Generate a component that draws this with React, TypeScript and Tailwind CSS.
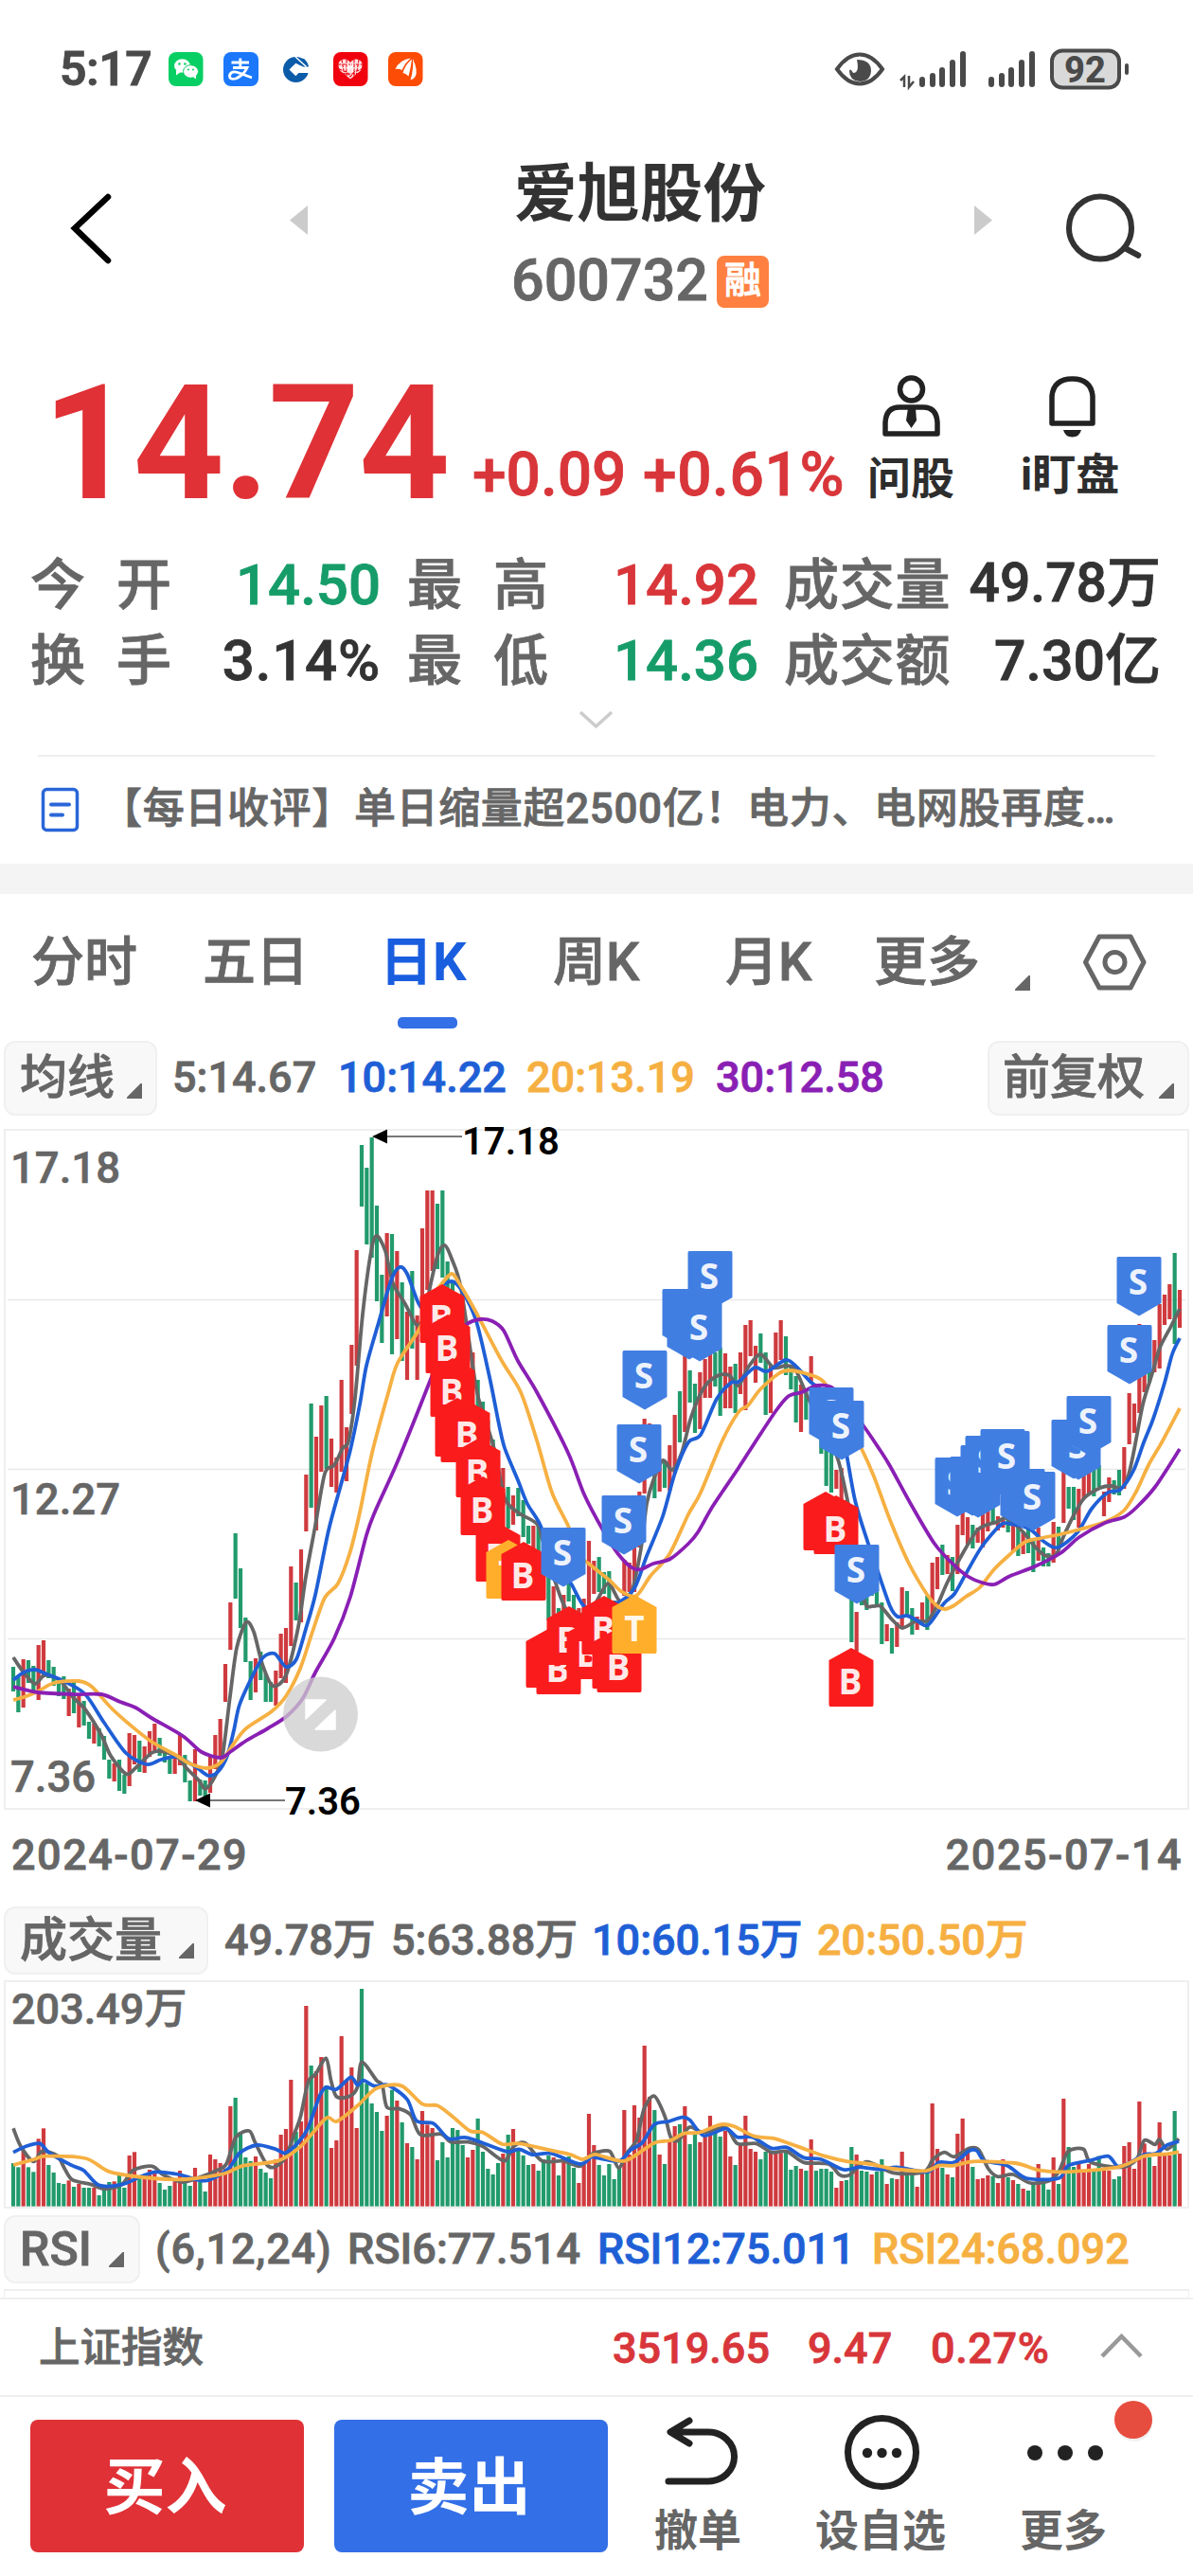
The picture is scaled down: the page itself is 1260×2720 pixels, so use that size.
import React from "react";

type Pt = [number, number];

const RED = "#cf3a3e";
const GREEN = "#229a6c";
const GRAY = "#666666";
const BLUE = "#1f5fd6";
const ORANGE = "#f6b042";
const PURPLE = "#8a1fb4";

const STEP = 16 / 3;
const barX = (i: number) => 14 + i * STEP;

/* Candle series: direction and high/low position for each trading day. */
const CANDLES = `G1760-1786 G1771-1808 R1752-1803 G1753-1777 G1759-1785 R1737-1795 R1732-1771 G1753-1772 G1760-1780 G1771-1791
G1770-1794 R1783-1812 G1776-1809 R1788-1824 G1796-1822 G1818-1836 R1820-1841 G1825-1844 G1833-1858 G1858-1878
R1862-1881 G1858-1891 G1874-1894 R1830-1886 R1832-1863 G1838-1871 R1844-1872 R1828-1855 R1820-1849 G1835-1854
G1849-1861 G1855-1873 R1856-1873 R1832-1864 G1853-1882 G1880-1902 R1847-1902 G1879-1896 G1880-1897 R1854-1893
R1832-1868 R1815-1855 R1757-1797 R1692-1742 G1619-1688 G1656-1719 G1708-1755 G1754-1795 R1751-1787 G1744-1774
G1767-1797 G1776-1797 R1764-1801 R1725-1772 R1719-1777 R1654-1738 G1671-1711 R1636-1713 R1557-1617 G1482-1592
R1517-1616 R1484-1554 G1474-1551 R1519-1570 R1539-1576 R1457-1554 R1507-1564 R1420-1493 R1320-1442 G1209-1274
G1233-1314 G1201-1328 G1273-1374 G1346-1418 R1302-1390 G1303-1430 R1321-1414 G1354-1437 R1385-1457 G1342-1424
R1389-1457 R1297-1374 R1257-1362 R1257-1342 G1271-1340 G1257-1349 G1332-1361 G1353-1378 G1370-1400 G1390-1420
R1410-1440 R1428-1454 G1457-1491 G1480-1510 G1500-1530 G1520-1550 G1540-1570 R1550-1590 G1570-1614 R1579-1610
G1571-1601 G1584-1623 G1611-1630 R1611-1637 G1609-1651 G1634-1676 G1664-1711 R1675-1706 G1698-1710 R1684-1702
G1672-1691 G1684-1702 R1698-1706 R1688-1706 R1627-1698 R1648-1683 G1644-1681 G1660-1683 G1659-1689 G1690-1700
R1690-1700 R1647-1685 R1650-1681 R1632-1681 R1575-1634 R1498-1577 R1503-1551 G1555-1582 R1544-1575 G1542-1571
R1526-1574 R1494-1556 G1469-1523 R1430-1512 G1447-1481 G1461-1513 R1449-1509 R1435-1476 R1430-1476 G1428-1464
G1423-1495 R1429-1487 R1443-1487 G1440-1492 R1428-1472 R1399-1489 R1394-1432 R1421-1460 G1408-1439 G1428-1494
R1441-1492 R1407-1444 R1394-1436 G1411-1452 G1441-1467 G1453-1502 R1462-1512 G1467-1499 R1432-1459 R1465-1490
G1501-1535 G1512-1569 G1526-1576 R1552-1572 R1550-1584 R1584-1600 G1673-1734 R1702-1744 G1673-1695 G1684-1700
G1670-1685 G1676-1694 G1692-1736 R1715-1733 G1719-1746 R1713-1739 R1676-1717 G1680-1705 G1698-1726 R1707-1721
R1692-1716 G1685-1721 R1650-1710 R1644-1678 G1631-1663 R1642-1662 G1644-1680 R1610-1662 R1593-1621 R1602-1631
G1610-1635 R1613-1629 R1597-1634 R1593-1617 G1592-1607 R1601-1616 R1603-1613 G1600-1618 R1608-1638 G1613-1643
R1618-1641 G1613-1640 G1625-1660 R1613-1648 G1634-1654 G1640-1654 R1607-1650 G1612-1635 R1553-1608 G1570-1593
G1570-1605 R1572-1613 R1557-1583 R1553-1577 G1552-1580 G1547-1570 R1575-1601 R1560-1586 G1563-1578 G1552-1579
R1528-1572 R1471-1525 R1482-1513 R1398-1492 R1440-1470 G1437-1460 R1415-1449 R1377-1445 R1367-1399 R1356-1393
G1323-1419 R1362-1402`
  .split(/\s+/)
  .map((s) => {
    const [t, b] = s.slice(1).split("-").map(Number);
    return { up: s[0] === "R", t, b };
  });

const VOLUMES = `G612 G625 R570 G625 G640 R535 R502 G618 G642 G675 G678 R667 G687 R678 G690 G690 R690 G714 G690 G672
R670 G650 G690 R588 R577 G660 R660 R633 R645 G675 G696 G684 R670 R636 G672 G684 R627 G672 G702 R585
R600 R612 R630 R432 G405 G513 G594 G606 R591 G630 G642 G660 R600 R522 R504 R348 G513 R480 R114 G303
R321 R276 G366 R564 R540 R210 R348 R309 R501 G60 G360 G423 G450 G510 R462 G380 R414 G483 R549 G561
R600 R447 R490 R501 G603 G546 G594 G501 G507 G555 R594 R570 G471 G576 G630 G648 G612 R582 G522 R504
G570 G588 G618 R615 G636 G600 G588 R594 G651 R600 G591 G627 R675 R615 R456 R555 G618 G651 G615 G663
G627 R444 R585 R429 R468 R240 R402 G444 R585 G615 R540 R495 G489 R432 G552 G520 R546 R525 R462 G515
G528 R510 R591 G618 R555 R462 R567 R576 G600 G576 R575 R575 R580 G575 G633 G621 R630 G636 R537 G636
G630 G630 G639 R690 R669 G666 G561 R585 G636 G639 R648 G639 G600 R678 G660 R663 R576 G651 G645 R687
R642 G640 R423 R567 G627 R648 G657 R519 R471 R570 G624 R663 R660 R651 G654 R675 R600 G657 R666 G678
R693 G699 G675 R615 G675 G696 R594 G678 R408 G561 G624 R610 R642 R615 G635 G590 R636 R636 G663 G654
R558 R546 R630 R417 R550 G594 R621 R483 R585 R588 G447 R582`
  .split(/\s+/)
  .map((s) => ({ up: s[0] === "R", v: Number(s.slice(1)) }));

const points = (s: string): Pt[] => s.trim().split(/\s+/).map((p) => p.split(",").map(Number) as Pt);

/* Catmull-Rom spline through the points. */
function smooth(p: Pt[]) {
  let d = `M${p[0][0]} ${p[0][1]}`;
  for (let i = 0; i < p.length - 1; i++) {
    const a = p[Math.max(i - 1, 0)];
    const b = p[i];
    const c = p[i + 1];
    const e = p[Math.min(i + 2, p.length - 1)];
    const f = 7;
    d += `C${b[0] + (c[0] - a[0]) / f} ${b[1] + (c[1] - a[1]) / f} ${c[0] - (e[0] - b[0]) / f} ${c[1] - (e[1] - b[1]) / f} ${c[0]} ${c[1]}`;
  }
  return d;
}

const MA5 = points(`14,1750 25,1766 37,1778 47,1769 63,1774 77,1792 90,1805 107,1832 117,1854 133,1873 143,1867 160,1851 170,1849 187,1855 197,1867 210,1880 217,1889 227,1876 235,1854 243,1791 250,1740 260,1713 268,1723 277,1757 288,1780 302,1769 315,1718 323,1665 333,1611 343,1556 353,1547 362,1529 368,1522 375,1476 383,1388 392,1321 398,1305 407,1321 415,1355 428,1377 440,1399 448,1390 455,1355 463,1323 470,1315 477,1329 487,1361 503,1466 513,1500 523,1534 533,1582 547,1597 567,1609 573,1626 587,1672 598,1699 613,1705 627,1696 642,1672 655,1691 667,1681 677,1635 683,1588 690,1563 700,1542 710,1552 720,1534 730,1496 743,1466 757,1453 770,1452 780,1463 790,1444 803,1430 817,1444 830,1442 840,1446 853,1475 870,1508 885,1541 895,1584 903,1630 913,1691 922,1696 930,1696 942,1710 953,1719 967,1712 980,1711 990,1695 1000,1672 1013,1647 1033,1615 1053,1607 1063,1603 1080,1617 1093,1633 1103,1642 1115,1642 1123,1623 1133,1602 1145,1582 1162,1571 1173,1569 1185,1571 1192,1557 1198,1530 1207,1483 1217,1450 1225,1423 1237,1400 1246,1382`);
const MA10 = points(`14,1774 25,1766 37,1763 50,1768 67,1775 90,1789 110,1819 133,1851 155,1863 170,1858 187,1855 207,1866 220,1875 230,1871 240,1854 247,1827 253,1800 267,1769 278,1750 290,1746 302,1760 313,1752 323,1720 333,1684 347,1616 360,1568 370,1531 380,1483 387,1442 400,1396 413,1352 422,1338 430,1345 442,1376 450,1382 463,1361 477,1353 488,1363 503,1395 517,1454 527,1504 533,1529 547,1563 557,1588 570,1609 587,1651 603,1672 618,1697 637,1691 653,1692 670,1677 683,1643 700,1601 713,1555 727,1523 740,1515 757,1477 772,1460 780,1459 797,1444 810,1448 830,1436 842,1444 857,1460 873,1473 890,1516 903,1584 917,1630 927,1659 940,1696 948,1707 958,1706 967,1710 980,1716 997,1693 1008,1683 1020,1662 1037,1633 1057,1610 1067,1609 1087,1614 1103,1628 1117,1634 1138,1618 1153,1593 1170,1576 1183,1573 1197,1553 1208,1523 1218,1498 1230,1460 1238,1430 1246,1413`);
const MA20 = points(`14,1795 25,1792 40,1786 57,1777 83,1775 97,1781 117,1803 137,1821 160,1839 187,1854 200,1862 218,1867 233,1861 247,1841 260,1825 287,1807 302,1791 317,1762 330,1723 343,1687 357,1672 370,1638 380,1597 393,1534 410,1471 420,1439 443,1403 457,1369 467,1355 477,1345 485,1355 503,1386 530,1437 550,1470 567,1521 583,1576 600,1611 613,1643 623,1652 643,1668 657,1681 672,1685 687,1664 707,1641 727,1599 740,1576 763,1521 780,1491 790,1484 803,1467 823,1450 833,1447 850,1450 870,1459 890,1494 910,1530 923,1559 940,1605 960,1651 980,1685 990,1696 998,1699 1008,1695 1020,1686 1035,1676 1050,1657 1067,1641 1083,1628 1100,1624 1120,1620 1140,1615 1167,1607 1187,1595 1200,1575 1213,1547 1227,1523 1246,1487`);
const MA30 = points(`14,1781 40,1787 77,1789 107,1789 127,1797 143,1803 160,1814 193,1833 213,1850 233,1856 243,1850 260,1838 283,1825 303,1812 320,1793 333,1766 353,1730 370,1686 387,1621 397,1594 420,1543 455,1456 470,1416 493,1398 507,1393 520,1395 532,1405 547,1437 567,1470 600,1534 617,1578 637,1616 653,1641 667,1655 677,1657 690,1651 708,1646 727,1630 737,1618 753,1590 780,1550 800,1519 820,1489 833,1474 847,1470 863,1463 880,1466 897,1487 913,1507 930,1532 940,1548 963,1590 987,1630 1007,1652 1023,1665 1037,1671 1050,1673 1067,1664 1093,1654 1120,1640 1140,1623 1167,1608 1187,1602 1200,1592 1220,1570 1246,1530`);

/* Volume averages, first and second half of the period. */
const volLine = (a: string, b: string): Pt[] => [
  ...points(a).map(([x, y]): Pt => [x / 2.489, 2080 + y / 3]),
  ...points(b).map(([x, y]): Pt => [630 + x / 2.489, 2080 + y / 3]),
];
const VMA5 = volLine(
  `35,502 55,560 88,607 110,575 150,588 170,630 190,665 240,680 275,694 320,680 350,635 400,622 430,650 480,672 530,655 570,635 595,615 620,530 655,510 670,545 700,615 720,625 750,595 775,515 790,465 810,355 830,330 857,280 870,350 885,402 920,400 940,370 951,292 990,350 1005,365 1017,435 1050,440 1080,460 1105,522 1160,520 1185,545 1230,545 1270,560 1325,605 1350,560 1380,548 1425,605 1480,605 1525,622 1555,585`,
  `0,578 35,575 58,627 80,580 105,540 125,440 152,400 180,465 195,530 215,540 245,498 280,515 340,500 370,550 420,550 460,578 500,575 545,610 610,615 640,650 665,650 710,608 780,643 860,640 885,600 915,578 940,592 980,565 1005,570 1030,630 1055,655 1095,648 1140,675 1190,668 1215,640 1240,575 1280,568 1300,610 1380,625 1420,600 1440,540 1468,553 1480,537 1500,568 1531,535`
);
const VMA10 = volLine(
  `35,578 70,558 105,550 130,580 190,620 220,635 260,682 320,680 370,655 410,640 470,648 540,668 600,630 630,580 675,555 725,568 750,580 785,545 810,500 840,400 857,372 885,378 922,340 940,365 955,350 985,368 1020,365 1070,410 1095,478 1140,487 1180,535 1230,532 1330,575 1365,568 1400,585 1450,582 1525,615 1555,592`,
  `0,595 60,605 90,570 120,548 152,490 190,480 225,467 245,475 282,525 340,503 370,530 410,530 460,565 500,562 545,595 590,600 650,633 690,625 750,632 790,625 870,640 900,610 940,610 980,573 1000,573 1020,605 1080,620 1130,660 1215,660 1240,620 1300,603 1345,590 1370,622 1400,612 1440,585 1470,582 1500,555 1531,543`
);
const VMA20 = volLine(
  `35,618 90,600 120,590 225,597 290,640 400,660 490,663 590,645 640,620 730,605 790,560 857,470 885,480 940,430 990,375 1055,367 1110,425 1150,430 1190,465 1235,510 1270,515 1320,552 1365,550 1450,572 1500,585 1530,600 1555,588`,
  `0,585 60,605 90,597 152,548 195,540 230,518 270,515 325,490 360,495 415,527 470,535 530,560 600,590 660,607 720,615 780,630 865,637 900,620 940,620 990,607 1100,612 1165,635 1230,640 1370,625 1440,590 1500,583 1531,577`
);

/* Trade markers: letter, centre x, top y. */
const MARKERS: [string, number, number][] = [
  ["B", 467, 1356], ["B", 473, 1388], ["B", 478, 1434], ["B", 483, 1476], ["B", 489, 1482], ["B", 494, 1479],
  ["B", 505, 1519], ["B", 510, 1559], ["B", 526, 1608], ["T", 537, 1626], ["B", 553, 1628],
  ["B", 579, 1720], ["B", 590, 1727], ["B", 601, 1696], ["B", 622, 1711], ["B", 638, 1685], ["B", 649, 1721],
  ["B", 654, 1725], ["T", 670, 1684], ["B", 872, 1575], ["B", 883, 1579], ["B", 899, 1740],
  ["S", 595, 1613], ["S", 659, 1579], ["S", 675, 1504], ["S", 681, 1426], ["S", 750, 1321], ["S", 723, 1361],
  ["S", 728, 1373], ["S", 739, 1375], ["S", 878, 1465], ["S", 889, 1479], ["S", 905, 1631],
  ["S", 1011, 1539], ["S", 1027, 1538], ["S", 1033, 1540], ["S", 1038, 1526], ["S", 1043, 1516], ["S", 1059, 1509],
  ["S", 1064, 1511], ["S", 1080, 1551], ["S", 1091, 1554], ["S", 1134, 1499], ["S", 1139, 1500], ["S", 1150, 1474],
  ["S", 1193, 1399], ["S", 1203, 1327],
];

function Marker({ k, x, y }: { k: string; x: number; y: number }) {
  const fill = k === "B" ? "#fa1c1c" : k === "T" ? "#ffae2b" : "#417ee2";
  const shape =
    k === "S"
      ? "M-22 0H22Q23.5 0 23.5 2V49L0 62.5L-23.5 49V2Q-23.5 0 -22 0Z"
      : "M0 0L23.5 13V60Q23.5 62 22 62H-22Q-23.5 62 -23.5 60V13Z";
  return (
    <g transform={`translate(${x} ${y})`}>
      <path d={shape} fill={fill} />
      <text x={k === "T" ? 0 : -1} y={k === "S" ? 40 : 48.5} textAnchor="middle" fontSize="37" fontWeight="700" fill="#fff" fillOpacity=".93" className="font-['Open_Sans',sans-serif]">
        {k}
      </text>
    </g>
  );
}

const Corner = ({ className = "" }: { className?: string }) => (
  <svg className={`shrink-0 ${className}`} width="18" height="18" viewBox="0 0 18 18">
    <path d="M17 1V17H2Q0 17 1.5 15L15.500 1Z" fill={GRAY} />
  </svg>
);

const T = ({ className, children }: { className: string; children: React.ReactNode }) => (
  <span className={`block shrink-0 whitespace-nowrap ${className}`}>{children}</span>
);

function StatusBar() {
  return (
    <div className="flex h-[146px] items-center">
      <T className="ml-[63px] w-[114px] text-[50px] font-semibold tracking-[-0.5px] text-[#4a4a4a]">5:17</T>
      <svg className="shrink-0" width="270" height="40" viewBox="177 52 270 40">
        <rect x="178" y="54" width="36.500" height="36" rx="8" fill="#07cf63" />
        <ellipse cx="192.500" cy="68.500" rx="8.500" ry="7.200" fill="#fff" />
        <path d="M186 73L186 78.500L191 75Z" fill="#fff" />
        <ellipse cx="201.500" cy="74.500" rx="8" ry="6.800" fill="#fff" stroke="#07cf63" strokeWidth="1" />
        <path d="M203 79.500L207 82.500V78Z" fill="#fff" />
        <g fill="#07cf63"><circle cx="189.500" cy="66.500" r="1.300" /><circle cx="195.500" cy="66.500" r="1.300" /><circle cx="199" cy="72.500" r="1" /><circle cx="204" cy="72.500" r="1" /></g>
        <rect x="236" y="54" width="37" height="36" rx="8" fill="#1b78fb" />
        <path d="M244.500 65H263M253.800 60.500V70.500M246 70.500H261Q257 79 249 82Q242 83.500 242.500 78.500Q244 73.500 251 75.500L266 81" stroke="#fff" strokeWidth="2.800" fill="none" />
        <circle cx="312.500" cy="72.500" r="13.500" fill="#0b5ca8" />
        <path d="M312.300 65.700L319 72.500L312.300 79.300L305.500 72.500Z" fill="#fff" />
        <path d="M312.300 65.700L318 68.500H327V76H315.500Z" fill="#fff" />
        <path d="M316 66.500L320 69.500H326Q325 64 321 61L313 60Z" fill="#0b5ca8" />
        <path d="M312 59L323.500 69.500" stroke="#fff" strokeWidth="1.500" />
        <rect x="352" y="54" width="36.500" height="36" rx="8" fill="#f0020e" />
        <path d="M370 82.500L359 73.500Q355.500 66 360 62.500Q366 59.500 370 65Q374 59.500 380 62.500Q384.500 66 381 73.500Z" fill="#fde3e4" />
        <path d="M361 62L364 80M366 62V82M374 62V82M379 62L376 80M357 67H383M358 72L366 75L370 80L374 75L382 72M362 77H378" stroke="#f0020e" strokeWidth="1.100" fill="none" strokeDasharray="3.500 1.200" />
        <path d="M367.500 66V75M372.500 66V75M367.500 70.500H372.500" stroke="#fff" strokeWidth="1.400" fill="none" />
        <rect x="410" y="54" width="36.500" height="36" rx="8" fill="#fd4c05" />
        <path d="M417.500 72Q422 62 434 60.500Q428 65 424.500 73Q421 71 417.500 72ZM425.500 76Q428 67 435 61.500Q434 70 431.500 79.500Q429 76.500 425.500 76ZM433.500 83.500Q437 72 436 61Q442 74 438.500 80Q437 83 433.500 83.500Z" fill="#fff" />
      </svg>
      <svg className="ml-auto mr-[62px] shrink-0" width="318" height="50" viewBox="880 47 318 50">
        <path d="M884 72Q895 56.500 908 56.500Q921 56.500 932 72Q921 87.500 908 87.500Q895 87.500 884 72Z" fill="none" stroke="#4a4a4a" strokeWidth="4" />
        <path d="M905 62Q920 62 920 74Q919 85 908 85Q897 84 897 74Q898 70 901 76Q908 76 905 62Z" fill="#4a4a4a" />
        <path d="M955 91V80L951 84M960 79V91L965 85" stroke="#4a4a4a" strokeWidth="2.500" fill="none" />
        <g stroke="#4a4a4a" strokeWidth="6" strokeLinecap="round">
          <path d="M974 83V88M985 79V88M995 73V88M1006 65V88M1017 56V88" />
          <path d="M1047 83V88M1058 79V88M1068 73V88M1079 65V88M1090 56V88" />
        </g>
        <rect x="1111" y="52.500" width="71" height="39" rx="11" fill="#d9d9d9" stroke="#4a4a4a" strokeWidth="4" />
        <path d="M1190 68V76" stroke="#4a4a4a" strokeWidth="4" strokeLinecap="round" />
        <text x="1146" y="85.500" textAnchor="middle" fontSize="38" fontWeight="800" fill="#4a4a4a" className="font-['Roboto',sans-serif]">92</text>
      </svg>
    </div>
  );
}

function Header() {
  return (
    <header className="flex h-[214px]">
      <svg className="ml-[70px] mt-[54px] shrink-0" width="60" height="84" viewBox="70 200 60 84">
        <path d="M114 208L79 241L114 275" fill="none" stroke="#000" strokeWidth="6.500" strokeLinecap="round" />
      </svg>
      <svg className="ml-[176px] mt-[71px] shrink-0" width="20" height="32"><path d="M0 15.500L19 0V31Z" fill="#cbcbcb" /></svg>
      <div className="ml-[214px] mt-[19px] w-[280px] shrink-0">
        <T className="h-[80px] pl-[3px] text-[66.500px] font-bold leading-[80px] text-[#333] [-webkit-text-stroke:0]">爱旭股份</T>
        <div className="mt-[24px] flex h-[56px] items-center">
          <T className="w-[217px] text-[61px] font-medium text-[#666]">600732</T>
          <span className="flex h-[55px] w-[55px] items-center justify-center rounded-[8px] bg-[#ff8040] pb-[1px] text-[39px] font-medium leading-none text-white">融</span>
        </div>
      </div>
      <svg className="ml-[209px] mt-[71px] shrink-0" width="20" height="32"><path d="M19 15.500L0 0V31Z" fill="#cbcbcb" /></svg>
      <svg className="ml-[75px] mt-[54px] shrink-0" width="86" height="84" viewBox="1124 200 86 84">
        <circle cx="1162" cy="240.500" r="33" fill="none" stroke="#333" strokeWidth="6" />
        <path d="M1188 262L1202 269.500" stroke="#333" strokeWidth="6.500" strokeLinecap="round" />
      </svg>
    </header>
  );
}

function Price() {
  return (
    <div className="flex h-[218px]">
      <T className="ml-[45px] mt-[25px] w-[454px] text-[168px] font-bold leading-[168px] tracking-[-1px] text-[#df3136] [-webkit-text-stroke:0]">14.74</T>
      <T className="mt-[106px] w-[180px] text-[64px] font-medium leading-[72px] text-[#d8363a]">+0.09</T>
      <T className="mt-[106px] w-[226px] text-[64px] font-medium leading-[72px] tracking-[0.6px] text-[#d8363a]">+0.61%</T>
      <div className="ml-[6px] mt-[34px] w-[112px] shrink-0">
        <svg className="ml-[20px]" width="64" height="72" viewBox="931 394 64 72">
          <circle cx="962.500" cy="411" r="12" fill="none" stroke="#222" strokeWidth="5.500" />
          <path d="M935 458V446Q936 430 950 430H975Q989 430 990 446V458Z" fill="none" stroke="#222" strokeWidth="5.500" strokeLinejoin="round" />
          <path d="M959 431H967L968 444L962.500 452L957 444Z" fill="#222" />
        </svg>
        <T className="mt-[9px] pl-[5px] text-[46px] font-bold leading-[60px] text-[#2d2d2d] [-webkit-text-stroke:0]">问股</T>
      </div>
      <div className="ml-[51px] mt-[34px] w-[120px] shrink-0">
        <svg className="ml-[31px]" width="54" height="72" viewBox="1105 394 54 72">
          <path d="M1111 447V418Q1113 400 1132.500 400Q1152 400 1154 418V447Z" fill="none" stroke="#222" strokeWidth="5.500" strokeLinejoin="round" />
          <path d="M1123 454H1142Q1140 461.500 1132.500 461.500Q1125 461.500 1123 454Z" fill="#222" />
        </svg>
        <T className="mt-[5px] pl-[4px] text-[46px] font-bold leading-[60px] text-[#2d2d2d] [-webkit-text-stroke:0]">i盯盘</T>
      </div>
    </div>
  );
}

const LABEL = "text-[58px] font-medium text-[#666]";
const VALUE = "text-right text-[60px] font-medium";

function Stats() {
  return (
    <div className="pl-[32px]">
      <div className="flex h-[80px] items-center leading-[80px]">
        <T className={`${LABEL} w-[150px] tracking-[33px]`}>今开</T>
        <T className={`${VALUE} w-[220px] text-[#169c69]`}>14.50</T>
        <T className={`${LABEL} ml-[28px] w-[150px] tracking-[33px]`}>最高</T>
        <T className={`${VALUE} w-[221px] text-[#d8363a]`}>14.92</T>
        <T className={`${LABEL} ml-[27px] w-[180px] tracking-[0.8px]`}>成交量</T>
        <T className="-mt-[4px] w-[218px] text-right text-[57px] font-medium text-[#333]">49.78万</T>
      </div>
      <div className="flex h-[80px] items-center leading-[80px]">
        <T className={`${LABEL} w-[150px] tracking-[33px]`}>换手</T>
        <T className={`${VALUE} w-[220px] tracking-[0.8px] text-[#333]`}>3.14%</T>
        <T className={`${LABEL} ml-[28px] w-[150px] tracking-[33px]`}>最低</T>
        <T className={`${VALUE} w-[221px] text-[#169c69]`}>14.36</T>
        <T className={`${LABEL} ml-[27px] w-[180px] tracking-[0.8px]`}>成交额</T>
        <T className="w-[218px] text-right text-[59px] font-medium text-[#333]">7.30亿</T>
      </div>
      <svg className="ml-[578px] mt-[12px] block" width="40" height="24"><path d="M3 2L19.500 17L36 2" fill="none" stroke="#ccc" strokeWidth="3.500" /></svg>
    </div>
  );
}

function News() {
  return (
    <div className="mx-[40px] mt-[23px] flex h-[115px] items-center border-t-[2px] border-[#efefef]">
      <svg className="ml-[3px] shrink-0" width="42" height="50" viewBox="0 0 42 50">
        <rect x="2.500" y="2.500" width="36" height="43" rx="4" fill="none" stroke="#2a66d8" strokeWidth="3.500" />
        <path d="M11 18.500H30M11 29.500H23" stroke="#2a66d8" strokeWidth="4" strokeLinecap="round" />
      </svg>
      <T className="ml-[21px] mt-[-3px] text-[44px] font-medium leading-[60px] tracking-[0.65px] text-[#666]">【每日收评】单日缩量超2500亿！电力、电网股再度…</T>
    </div>
  );
}

function Tabs() {
  return (
    <nav className="flex h-[154px] pt-[32px] text-[56px] font-medium leading-[80px] text-[#666]">
      <T className="ml-[33px] w-[181px]">分时</T>
      <T className="w-[187px]">五日</T>
      <div className="w-[183px] shrink-0 font-bold text-[#1a5ee0]">
        <T className="[-webkit-text-stroke:0]">日K</T>
        <div className="ml-[19px] mt-[18px] h-[12px] w-[63px] rounded-[5px] bg-[#336fe6]" />
      </div>
      <T className="w-[182px]">周K</T>
      <T className="w-[157px]">月K</T>
      <T className="w-[148px]">更多</T>
      <Corner className="mt-[53px]" />
      <svg className="ml-[54px] mt-[8px] shrink-0" width="70" height="64" viewBox="0 0 70 64">
        <path d="M3.500 32L18 5H51L65 32L51 59H18Z" fill="none" stroke="#666" strokeWidth="5" strokeLinejoin="round" />
        <circle cx="34.500" cy="32" r="10.500" fill="none" stroke="#666" strokeWidth="5" />
      </svg>
    </nav>
  );
}

const PILL = "flex shrink-0 items-center rounded-[12px] border-[2px] border-[#f0f0f0] bg-[#f8f8f8] text-[50px] font-medium text-[#666]";
const VAL = "text-[45px] font-medium";

function AverageRow() {
  return (
    <div className="flex h-[80px] items-center pl-[4px]">
      <div className={`${PILL} h-[79px] w-[162px] pl-[15px]`}>
        <T className="w-[112px] leading-[76px]">均线</T>
        <Corner className="mt-[28px]" />
      </div>
      <T className={`${VAL} ml-[16px] w-[175px] text-[#666]`}>5:14.67</T>
      <T className={`${VAL} w-[199px] text-[#1f5fd6]`}>10:14.22</T>
      <T className={`${VAL} w-[200px] text-[#f6b042]`}>20:13.19</T>
      <T className={`${VAL} w-[287px] text-[#8a1fb4]`}>30:12.58</T>
      <div className={`${PILL} h-[79px] w-[213px] pl-[14px]`}>
        <T className="w-[164px] leading-[76px]">前复权</T>
        <Corner className="mt-[28px]" />
      </div>
    </div>
  );
}

function PriceChart() {
  return (
    <svg className="block" width="1260" height="742" viewBox="0 1178 1260 742">
      <rect x="5" y="1193" width="1250" height="717" fill="none" stroke="#efefef" strokeWidth="2" />
      <path d="M8 1372.500H1252M8 1551.500H1252M8 1730.500H1252" stroke="#e9e9e9" strokeWidth="1.500" />
      {CANDLES.map((c, i) => (
        <rect key={i} x={barX(i) - 2.1} y={c.t} width="4.200" height={c.b - c.t} fill={c.up ? RED : GREEN} />
      ))}
      <g fill="none" strokeWidth="3.800" strokeLinejoin="round">
        <path d={smooth(MA5)} stroke={GRAY} />
        <path d={smooth(MA10)} stroke={BLUE} />
        <path d={smooth(MA20)} stroke={ORANGE} />
        <path d={smooth(MA30)} stroke={PURPLE} />
      </g>
      {MARKERS.map(([k, x, y], i) => (
        <Marker key={i} k={k} x={x} y={y} />
      ))}
      <g fill="#666" stroke="#666" strokeWidth=".6" fontSize="45.500" fontWeight="500" className="font-['Roboto',sans-serif]">
        <text x="11" y="1249">17.18</text>
        <text x="11" y="1599">12.27</text>
        <text x="11" y="1892">7.36</text>
      </g>
      <path d="M408 1200H488M222 1901H301" stroke="#777" strokeWidth="2" />
      <path d="M393 1200L409 1192.500V1207.500ZM206 1901L222 1893.500V1908.500Z" fill="#000" />
      <g fill="#000" fontSize="40" fontWeight="600" className="font-['Roboto',sans-serif]">
        <text x="488" y="1219">17.18</text>
        <text x="301" y="1916">7.36</text>
      </g>
      <circle cx="338.500" cy="1810" r="39.500" fill="#cccccc" fillOpacity=".75" />
      <path d="M323 1795H344L323 1815ZM354 1806V1826H333Z" fill="#fff" stroke="#fff" strokeWidth="1.500" strokeLinejoin="round" />
    </svg>
  );
}

function VolumeChart() {
  return (
    <svg className="block" width="1260" height="248" viewBox="0 2087 1260 248">
      <rect x="5" y="2092" width="1250" height="239" fill="none" stroke="#efefef" strokeWidth="2" />
      {VOLUMES.map((b, i) => (
        <rect key={i} x={barX(i) - 2.1} y={2080 + b.v / 3} width="4.200" height={(749 - b.v) / 3} fill={b.up ? RED : GREEN} />
      ))}
      <g fill="none" strokeWidth="3.800" strokeLinejoin="round">
        <path d={smooth(VMA5)} stroke={GRAY} />
        <path d={smooth(VMA10)} stroke={BLUE} />
        <path d={smooth(VMA20)} stroke={ORANGE} />
      </g>
      <text x="12" y="2137" fontSize="45" fontWeight="500" fill="#666" stroke="#666" strokeWidth=".6" className="font-['Roboto','Noto_Sans_CJK_SC',sans-serif]">203.49万</text>
    </svg>
  );
}

function Footer() {
  return (
    <>
      <div className="mx-[4px] mt-[6px] h-[9px] border-x-[1px] border-t-[2px] border-[#efefef]" />
      <div className="flex h-[105px] items-center border-y-[2px] border-[#efefef]">
        <T className="ml-[41px] mt-[3px] w-[606px] text-[43.500px] font-medium leading-[60px] text-[#666]">上证指数</T>
        <T className={`${VAL} mt-[3px] w-[206px] text-[#d8363a]`}>3519.65</T>
        <T className={`${VAL} mt-[3px] w-[130px] text-[#d8363a]`}>9.47</T>
        <T className={`${VAL} mt-[3px] w-[178px] tracking-[0.6px] text-[#d8363a]`}>0.27%</T>
        <svg className="mt-[-4px] shrink-0" width="48" height="30"><path d="M3 26L23.500 5L44 26" fill="none" stroke="#999" strokeWidth="4.500" /></svg>
      </div>
      <div className="flex h-[189px] pl-[32px] pt-[24px]">
        <button className="h-[140px] w-[289px] shrink-0 rounded-[8px] bg-[#df3136] pr-[4px] pt-[6px] text-[65px] font-bold text-white [-webkit-text-stroke:0]">买入</button>
        <button className="ml-[32px] h-[140px] w-[289px] shrink-0 rounded-[8px] bg-[#336fe6] pr-[4px] pt-[6px] text-[65px] font-bold text-white [-webkit-text-stroke:0]">卖出</button>
        <div className="ml-[49px] w-[170px] shrink-0">
          <svg className="ml-[10px] mt-[-6px] block" width="82" height="84" viewBox="700 2550 82 84">
            <path d="M705 2621H747A27 25.500 0 0 0 747 2569H708M727 2557L707 2569L727 2581" fill="none" stroke="#222" strokeWidth="7" strokeLinecap="round" strokeLinejoin="round" />
          </svg>
          <T className="mt-[9px] text-[46px] font-bold leading-[60px] text-[#666] [-webkit-text-stroke:0]">撤单</T>
        </div>
        <div className="w-[216px] shrink-0">
          <svg className="ml-[29px] mt-[-8px] block" width="84" height="84" viewBox="890 2547 84 84">
            <circle cx="931.500" cy="2589.500" r="36" fill="none" stroke="#222" strokeWidth="7" />
            <g fill="#222"><circle cx="916" cy="2590" r="5.200" /><circle cx="931.500" cy="2590" r="5.200" /><circle cx="947" cy="2590" r="5.200" /></g>
          </svg>
          <T className="mt-[11px] text-[46px] font-bold leading-[60px] text-[#666] [-webkit-text-stroke:0]">设自选</T>
        </div>
        <div className="w-[150px] shrink-0">
          <svg className="mt-[-26px] block" width="150" height="104" viewBox="1077 2529 150 104">
            <g fill="#222"><circle cx="1093" cy="2590" r="8" /><circle cx="1125" cy="2590" r="8" /><circle cx="1157" cy="2590" r="8" /></g>
            <circle cx="1198" cy="2559" r="19" fill="#000" fillOpacity=".06" />
            <circle cx="1197" cy="2555" r="20" fill="#e64d3f" />
          </svg>
          <T className="mt-[9px] text-[46px] font-bold leading-[60px] text-[#666] [-webkit-text-stroke:0]">更多</T>
        </div>
      </div>
    </>
  );
}

export default function App() {
  return (
    <div className="h-[2720px] w-[1260px] overflow-hidden bg-white font-['Roboto','Noto_Sans_CJK_SC',sans-serif] [-webkit-text-stroke:0.8px]">
      <StatusBar />
      <Header />
      <Price />
      <Stats />
      <News />
      <div className="h-[32px] bg-[#f4f4f4]" />
      <Tabs />
      <AverageRow />
      <PriceChart />
      <div className="flex h-[78px] items-center justify-between px-[12px] text-[45px] font-medium text-[#666]">
        <T className="tracking-[1.500px]">2024-07-29</T>
        <T className="mr-[-1px] tracking-[1.500px]">2025-07-14</T>
      </div>
      <div className="mt-[15px] flex h-[72px] items-center pl-[4px]">
        <div className={`${PILL} h-[72px] w-[216px] pl-[15px]`}>
          <T className="w-[167px] leading-[68px]">成交量</T>
          <Corner className="mt-[22px]" />
        </div>
        <T className={`${VAL} ml-[17px] w-[176px] text-[#666]`}>49.78万</T>
        <T className={`${VAL} w-[212px] text-[#666]`}>5:63.88万</T>
        <T className={`${VAL} w-[238px] text-[#1f5fd6]`}>10:60.15万</T>
        <T className={`${VAL} text-[#f6b042]`}>20:50.50万</T>
      </div>
      <div className="h-[2px]" />
      <VolumeChart />
      <div className="mt-[4px] flex h-[72px] items-center pl-[4px]">
        <div className={`${PILL} h-[72px] w-[144px] pl-[15px]`}>
          <T className="w-[93px] leading-[68px]">RSI</T>
          <Corner className="mt-[22px]" />
        </div>
        <T className={`${VAL} ml-[16px] w-[203px] tracking-[0.8px] text-[#666]`}>(6,12,24)</T>
        <T className={`${VAL} w-[264px] text-[#666]`}>RSI6:77.514</T>
        <T className={`${VAL} w-[290px] text-[#1f5fd6]`}>RSI12:75.011</T>
        <T className={`${VAL} text-[#f6b042]`}>RSI24:68.092</T>
      </div>
      <Footer />
    </div>
  );
}
